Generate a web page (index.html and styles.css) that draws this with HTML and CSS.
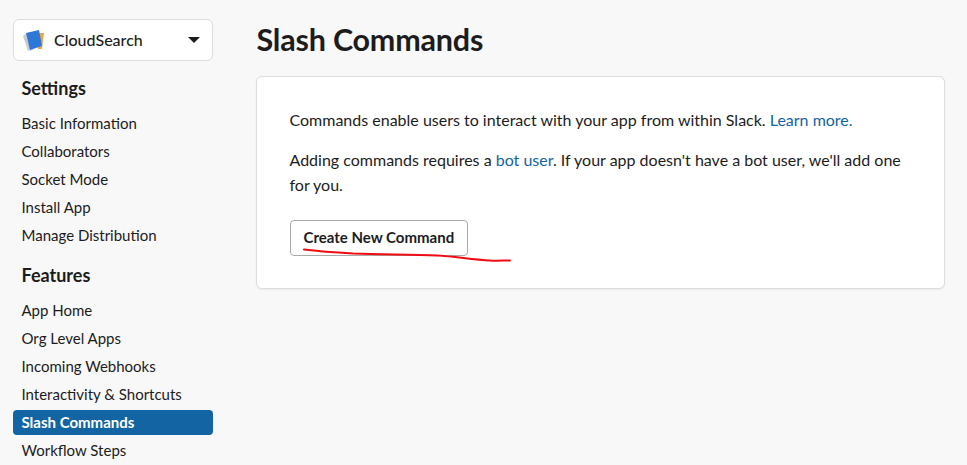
FILE: index.html
```html
<!DOCTYPE html>
<html lang="en">
<head>
  <meta charset="UTF-8">
  <title>Slash Commands</title>
  <link rel="stylesheet" href="styles.css">
</head>
<body>
  <div class="page">
    <aside class="sidebar">
      <div class="app-select">
        <svg class="app-icon" width="26" height="26" viewBox="0 0 26 26">
          <polygon points="1,9 5,6 11,23 6,24" fill="#c9ccd0"/>
          <polygon points="17,6 22,6 20,22 16,22" fill="#e3a94a"/>
          <polygon points="4,6 17,3 20,19 8,23" fill="#2f78d8"/>
        </svg>
        <span class="app-name">CloudSearch</span>
        <span class="caret"></span>
      </div>
      <h3 class="nav-title">Settings</h3>
      <ul class="nav">
        <li>Basic Information</li>
        <li>Collaborators</li>
        <li>Socket Mode</li>
        <li>Install App</li>
        <li>Manage Distribution</li>
      </ul>
      <h3 class="nav-title">Features</h3>
      <ul class="nav">
        <li>App Home</li>
        <li>Org Level Apps</li>
        <li>Incoming Webhooks</li>
        <li>Interactivity &amp; Shortcuts</li>
        <li class="active">Slash Commands</li>
        <li>Workflow Steps</li>
      </ul>
    </aside>
    <main class="content">
      <h1>Slash Commands</h1>
      <div class="card">
        <p>Commands enable users to interact with your app from within Slack. <a href="#">Learn more.</a></p>
        <p>Adding commands requires a <a href="#">bot user</a>. If your app doesn't have a bot user, we'll add one for you.</p>
        <button class="btn">Create New Command</button>
      </div>
    </main>
  </div>
  <svg class="scribble" width="967" height="465" viewBox="0 0 967 465">
    <path d="M304 249.500 C320 251.500 335 252.500 353 253.500 C385 254.500 410 254.500 437 255.500 C455 256.500 472 259.500 490 260.500 C497 261 503 260.500 510 260.500" fill="none" stroke="#f00c14" stroke-width="2" stroke-linecap="round"/>
  </svg>
</body>
</html>
```
FILE: styles.css
```css
html, body {
  margin: 0;
  padding: 0;
  height: 465px;
  overflow: hidden;
}

body {
  background: #f8f8f8;
  color: #1d1c1d;
  font-family: Lato, "Open Sans", sans-serif;
  font-size: 15px;
}

.page {
  display: flex;
  padding: 19px 22px 0 13px;
}

.sidebar {
  width: 200px;
  flex-shrink: 0;
}

.app-select {
  display: flex;
  align-items: center;
  height: 42px;
  box-sizing: border-box;
  padding: 0 12px 0 8px;
  background: #fff;
  border: 1px solid #ddd;
  border-radius: 6px;
}

.app-icon {
  margin-right: 6px;
}

.app-name {
  flex: 1;
  padding-bottom: 2px;
  font-size: 16px;
  font-weight: 500;
}

.caret {
  width: 0;
  height: 0;
  border-left: 6px solid transparent;
  border-right: 6px solid transparent;
  border-top: 6px solid #1d1c1d;
}

.nav-title {
  margin: 15px 0 11px 8.500px;
  font-size: 18px;
  line-height: 24px;
  font-weight: 700;
}

.nav {
  list-style: none;
  margin: 0 0 13px;
  padding: 0;
}

.nav li {
  height: 25px;
  line-height: 25px;
  margin-bottom: 3px;
  padding-left: 8.500px;
  border-radius: 4px;
}

.nav li.active {
  background: #1264a3;
  color: #fff;
  font-weight: 700;
}

.content {
  flex: 1;
  margin-left: 43px;
}

h1 {
  margin: 0 0 17px;
  font-size: 30.500px;
  line-height: 40px;
  font-weight: 700;
  letter-spacing: -0.2px;
  padding-left: 0.500px;
}

.card {
  height: 213px;
  box-sizing: border-box;
  padding: 30px 20px 0 32.500px;
  background: #fff;
  border: 1px solid #ddd;
  border-radius: 6px;
  box-shadow: 0 1px 2px rgba(0, 0, 0, 0.06);
}

.card p {
  margin: 0 0 15px;
  font-size: 16px;
  line-height: 25px;
}

.card a {
  color: #1264a3;
  text-decoration: none;
}

.btn {
  height: 36px;
  padding: 0 13px 2px;
  margin-top: 8px;
  background: #fff;
  border: 1px solid #aaa;
  border-radius: 4px;
  color: #1d1c1d;
  font-family: inherit;
  font-size: 15px;
  font-weight: 700;
}

.scribble {
  position: absolute;
  left: 0;
  top: 0;
  pointer-events: none;
}
```
